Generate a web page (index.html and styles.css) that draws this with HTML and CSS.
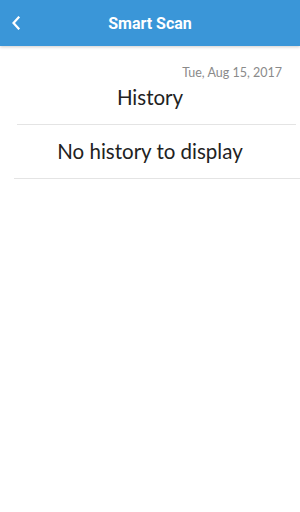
FILE: index.html
```html
<!DOCTYPE html>
<html>
  <head>
    <meta charset="UTF-8" />
    <title>Smart Scan</title>
    <link rel="stylesheet" href="styles.css">
  </head>
  <body>
    <!-- Top bar -->
    <div class="top-bar">
      <button class="back-btn" title="Back">
        <svg width="10" height="14" viewBox="0 0 10 14">
          <path d="M7.5 1.5 L2.5 7 L7.5 12.5" fill="none" stroke="#fff" stroke-width="2.2" stroke-linecap="square"/>
        </svg>
      </button>
      <div class="top-title">Smart Scan</div>
    </div>

    <div class="history">
      <div class="history-date">Tue, Aug 15, 2017</div>
      <div class="history-title">History</div>
      <div class="divider divider-top"></div>
      <div class="history-empty">No history to display</div>
      <div class="divider divider-bottom"></div>
    </div>
  </body>
</html>
```

FILE: styles.css
```css
body {
  margin: 0;
  font-family: Lato, "Open Sans", sans-serif;
  background: #fff;
  color: #222;
}

.top-bar {
  height: 46px;
  background: #3a96d8;
  display: flex;
  align-items: center;
  justify-content: center;
  position: relative;
  box-shadow: 0 1px 3px rgba(0, 0, 0, 0.2);
}
.top-title {
  color: #fff;
  font-family: Roboto, sans-serif;
  font-size: 16px;
  font-weight: bold;
  padding-top: 1px;
}
.back-btn {
  position: absolute;
  left: 11px;
  top: 16px;
  background: none;
  border: none;
  padding: 0;
  cursor: pointer;
}

.history {
  padding-top: 19px;
}
.history-date {
  text-align: right;
  padding-right: 18px;
  font-size: 12.5px;
  color: #8a8a8a;
  line-height: 16px;
}
.history-title {
  margin-top: 2px;
  text-align: center;
  font-size: 20.5px;
  line-height: 28px;
  padding-bottom: 13px;
}
.history-empty {
  text-align: center;
  font-size: 20.5px;
  line-height: 28px;
  padding: 12px 0 13px;
}

.divider {
  height: 1px;
  background: #e4e4e4;
}
.divider-top {
  margin: 0 4px 0 17px;
}
.divider-bottom {
  margin-left: 14px;
}
```
